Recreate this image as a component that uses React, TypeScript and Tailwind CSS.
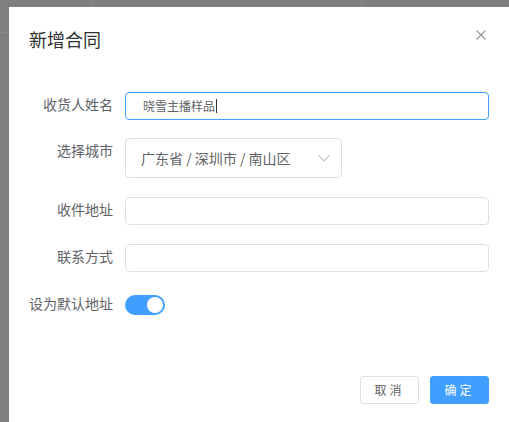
import React from "react";

const font = { fontFamily: '"Noto Sans CJK SC", "Noto Sans", sans-serif' };

function FormRow({
  label,
  children,
  className = "",
}: {
  label: string;
  children: React.ReactNode;
  className?: string;
}) {
  return (
    <div className={`flex items-start ${className}`}>
      <label className="w-[96px] shrink-0 pr-[12px] text-right text-[14px] leading-[25px] text-[#606266]">
        {label}
      </label>
      {children}
    </div>
  );
}

function TextInput({ value, focused }: { value?: string; focused?: boolean }) {
  return (
    <div
      className={`flex h-[28px] flex-1 items-center rounded-[4px] border bg-white pl-[17px] text-[12px] text-[#606266] ${
        focused ? "border-[#409eff]" : "border-[#dcdfe6]"
      }`}
    >
      {value}
      {focused && <span className="ml-px h-[14px] w-px bg-[#303133]" />}
    </div>
  );
}

export default function App() {
  return (
    <div className="relative h-[422px] w-[509px] overflow-hidden bg-[#7f7f7f]" style={font}>
      {/* page behind the mask */}
      <div className="flex h-[7px]">
        <div className="w-[92px] border-r border-[#888888]" />
        <div className="w-[270px] border-r border-[#888888]" />
      </div>
      <div className="h-[26px] w-[9px] border-b border-[#888888]" />

      {/* dialog */}
      <div className="absolute left-[9px] top-[7px] flex h-[415px] w-[500px] flex-col bg-white">
        <div className="flex h-[65px] items-start justify-between px-[20px] pt-[20px]">
          <span className="text-[18px] leading-[24px] text-[#303133]">新增合同</span>
          <svg
            width="10"
            height="10"
            viewBox="0 0 10 10"
            className="mt-[3px] mr-[3px]"
            stroke="#909399"
            strokeWidth="1.1"
          >
            <path d="M0.5 0.5 L9.5 9.5 M9.5 0.5 L0.5 9.5" />
          </svg>
        </div>

        <div className="flex flex-col px-[20px] pt-[20px]">
          <FormRow label="收货人姓名">
            <TextInput value="晓雪主播样品" focused />
          </FormRow>

          <FormRow label="选择城市" className="mt-[18px]">
            <div className="flex h-[40px] w-[217px] items-center justify-between rounded-[4px] border border-[#dcdfe6] pl-[15px] pr-[11px] text-[14px] text-[#606266]">
              <span className="whitespace-pre">广东省 / 深圳市 / 南山区</span>
              <svg width="12" height="7" viewBox="0 0 12 7" fill="none" stroke="#c0c4cc" strokeWidth="1.1">
                <path d="M0.5 0.5 L6 6 L11.5 0.5" />
              </svg>
            </div>
          </FormRow>

          <FormRow label="收件地址" className="mt-[19px]">
            <TextInput />
          </FormRow>

          <FormRow label="联系方式" className="mt-[19px]">
            <TextInput />
          </FormRow>

          <FormRow label="设为默认地址" className="mt-[19px]">
            <div className="flex h-[28px] items-center">
              <div className="flex h-[20px] w-[40px] items-center justify-end rounded-full bg-[#409eff] pr-[2px]">
                <div className="h-[16px] w-[16px] rounded-full bg-white" />
              </div>
            </div>
          </FormRow>
        </div>

        <div className="mt-[57px] flex justify-end gap-[11px] px-[20px]">
          <button className="flex h-[28px] w-[59px] items-center justify-center rounded-[3px] border border-[#dcdfe6] bg-white text-[12px] tracking-[3px] text-[#606266]">
            取消
          </button>
          <button className="flex h-[28px] w-[59px] items-center justify-center rounded-[3px] border border-[#409eff] bg-[#409eff] text-[12px] tracking-[3px] text-white">
            确定
          </button>
        </div>
      </div>
    </div>
  );
}
